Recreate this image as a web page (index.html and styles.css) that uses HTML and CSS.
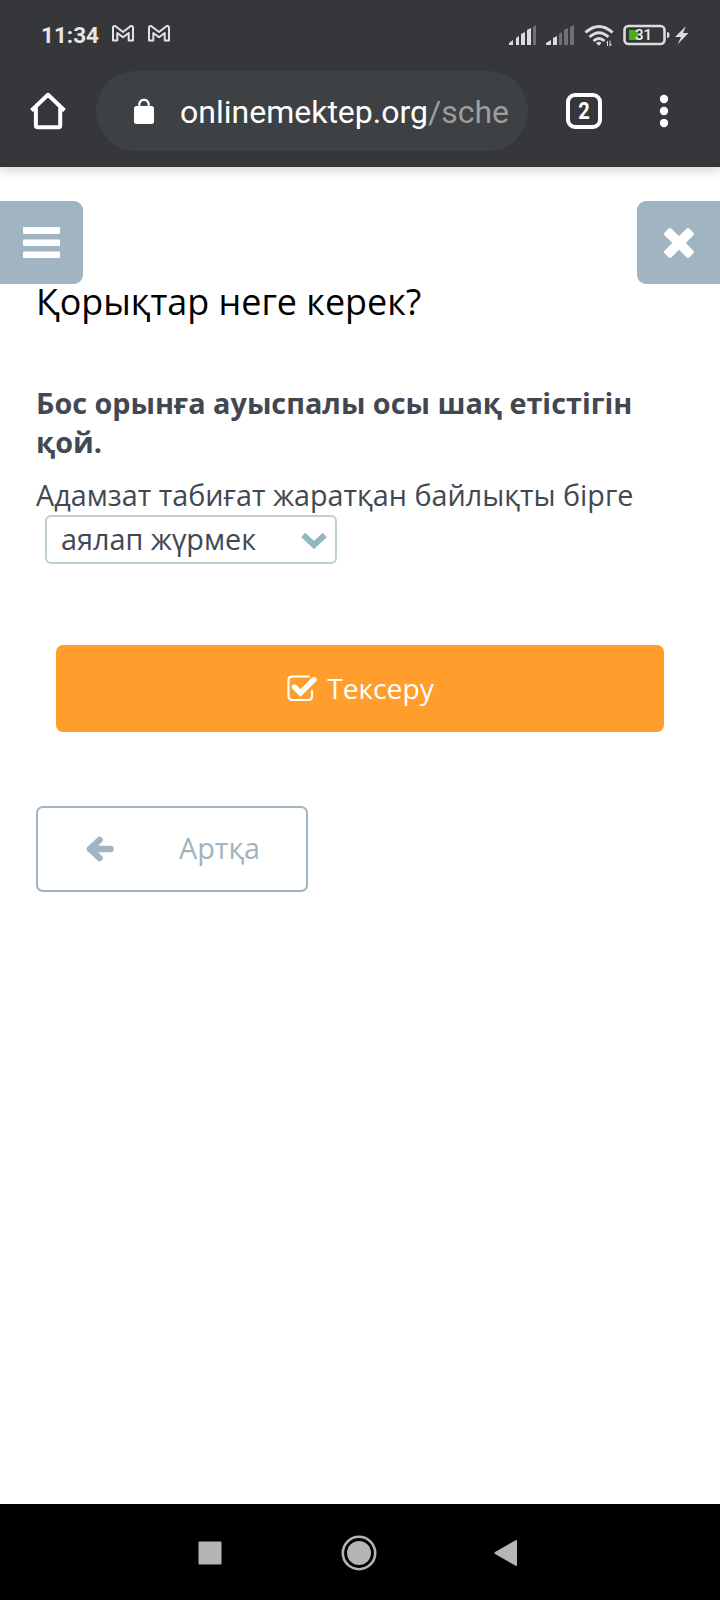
FILE: index.html
```html
<!DOCTYPE html>
<html lang="kk">
<head>
<meta charset="utf-8">
<title>onlinemektep.org</title>
<link rel="stylesheet" href="styles.css">
</head>
<body>
<header class="browser">
  <div class="status">
    <span class="time">11:34</span>
    <svg class="mail" width="24" height="18" viewBox="0 0 24 18"><path d="M2 16.500V4Q2 1.500 4.200 2L12 8 19.800 2Q22 1.500 22 4V16.500H17.700V9L12 13.200 6.300 9V16.500Z"/></svg>
    <svg class="mail" width="24" height="18" viewBox="0 0 24 18"><path d="M2 16.500V4Q2 1.500 4.200 2L12 8 19.800 2Q22 1.500 22 4V16.500H17.700V9L12 13.200 6.300 9V16.500Z"/></svg>
    <svg class="signals" width="182" height="24" viewBox="507 23 182 24">
      <g fill="#dcdcde"><path d="M509 45v-2l4-3v5zM516 38l3-2v9h-3zM521 34l4-2v13h-4zM527 30l4-2v17h-4z"/><path d="M546 45v-2l5-3v5zM553 38l4-2v9h-4z"/></g>
      <g fill="#707174"><path d="M533 27l3-2v20h-3zM559 34l3-2v13h-3zM564 30l4-2v17h-4zM570 27l4-2v20h-4z"/></g>
      <g fill="none" stroke="#dcdcde" stroke-width="3"><path d="M585.500 32.500Q599 20.500 612.500 32.500M589.500 37Q599 28.500 608.500 37M593.500 41Q599 36 604.500 41"/></g>
      <path d="M596 43q3-2.500 5.500 0l-2.700 2.700zM606 43l2-2.500V46h-1v-3zM609.500 40.500h1V44h1.500l-2.500 3z" fill="#dcdcde"/>
      <rect x="624.500" y="26" width="40" height="18" rx="4" fill="none" stroke="#dcdcde" stroke-width="2.600"/>
      <path d="M629 30h9v10h-9z" fill="#4cae13"/><path d="M667 32q2.500 0 2.500 2v2q0 2-2.500 2z" fill="#dcdcde"/>
      <text x="643.500" y="40.300" class="charge">31</text>
      <path d="M686 26L675 37h6l-3.500 7.500L688.500 33h-5.500z" fill="#dcdcde"/>
    </svg>
  </div>
  <div class="toolbar">
    <svg class="home" width="38" height="38" viewBox="0 0 38 38"><path d="M2.500 18.500L19 2.800 35.500 18.500M6.900 15V33.500Q6.900 35.300 8.700 35.300H29.500Q31.200 35.300 31.200 33.500V15" /></svg>
    <div class="address">
      <svg class="lock" width="20" height="26" viewBox="0 0 20 26"><path d="M5.300 10V5.800a4.800 4.800 0 0 1 9.400 0V10" fill="none" stroke="#fff" stroke-width="2.200"/><rect y="8" width="20" height="18" rx="2.500" fill="#fff"/></svg>
      <span class="url">onlinemektep.org<span class="path">/sche</span></span>
    </div>
    <div class="tabs"><span>2</span></div>
    <svg class="dots" width="10" height="34" viewBox="0 0 10 34"><g fill="#fff"><circle cx="5" cy="5" r="4.200"/><circle cx="5" cy="17" r="4.200"/><circle cx="5" cy="29" r="4.200"/></g></svg>
  </div>
</header>
<main class="page">
  <div class="actions">
    <button class="square menu" aria-label="menu"><svg width="38" height="32" viewBox="0 0 38 32"><g fill="#fff"><rect width="37" height="7" rx="1"/><rect y="12.500" width="37" height="6.500" rx="1"/><rect y="24.500" width="37" height="6.500" rx="1"/></g></svg></button>
    <button class="square close" aria-label="close"><svg width="30" height="30" viewBox="0 0 30 30"><g fill="#fff"><rect x="-2.500" y="10.200" width="35" height="9.600" rx="2.200" transform="rotate(45 15 15)"/><rect x="-2.500" y="10.200" width="35" height="9.600" rx="2.200" transform="rotate(-45 15 15)"/></g></svg></button>
  </div>
  <h1>Қорықтар неге керек?</h1>
  <p class="task">Бос орынға ауыспалы осы шақ етістігін қой.</p>
  <p class="sentence">Адамзат табиғат жаратқан байлықты бірге</p>
  <div class="select"><span>аялап жүрмек</span><svg width="26" height="18" viewBox="0 0 26 18"><path d="M2.200 4L13 14 23.800 4"/></svg></div>
  <button class="check"><svg width="30" height="27" viewBox="0 0 30 27"><path d="M22 1.500H5.500Q1.500 1.500 1.500 5.500V21Q1.500 25 5.500 25H21Q25 25 25 21V16" stroke-width="2.200"/><path d="M7.500 12L13.500 18 27 4.500" stroke-width="5.400"/></svg><span>Тексеру</span></button>
  <button class="back"><svg width="30" height="26" viewBox="0 0 30 26"><path d="M14.500 4L5 13l9.500 9M5 13H25.500"/></svg><span>Артқа</span></button>
</main>
<nav class="system">
  <svg width="24" height="24" viewBox="0 0 24 24"><rect x=".5" y=".5" width="23" height="23" rx="1"/></svg>
  <svg width="36" height="36" viewBox="0 0 36 36"><circle cx="18" cy="18" r="16.200" fill="none" stroke="#b5b5b5" stroke-width="2.600"/><circle cx="18" cy="18" r="12"/></svg>
  <svg width="24" height="28" viewBox="0 0 24 28"><path d="M1 13Q0 14 1 15L22 27Q23 27 23 26V2Q23 1 22 1Z"/></svg>
</nav>
</body>
</html>
```
FILE: styles.css
```css
* { box-sizing: border-box; }
body { margin: 0; width: 720px; height: 1600px; display: flex; flex-direction: column; background: #fff; color: #424852; font-family: "Open Sans", "Noto Sans", sans-serif; overflow: hidden; }
button { font: inherit; padding: 0; border: 0; }
svg { display: block; flex: none; }
p, h1 { margin: 0; white-space: nowrap; }
.browser { height: 167px; flex: none; background: #36373b; color: #fff; font-family: Roboto, sans-serif; box-shadow: 0 2px 12px #00000038; }
.status { height: 71px; padding-left: 41px; display: flex; align-items: flex-start; color: #e6e6e8; }
.time { width: 70px; padding-top: 22px; font-size: 22.500px; line-height: 27px; font-weight: 700; }
.mail { margin: 24px 12px 0 0; fill: none; stroke: #e3e3e5; stroke-width: 2; stroke-linejoin: round; }
.signals { margin: 23px 31px 0 auto; }
.charge { font-size: 15px; font-weight: 500; text-anchor: middle; fill: #f0f0f0; }
.toolbar { height: 80px; display: flex; align-items: center; }
.home { margin: 0 29px; fill: none; stroke: #fff; stroke-width: 4; stroke-linejoin: round; }
.address { width: 432px; height: 80px; border-radius: 40px; background: #3e4144; display: flex; align-items: center; padding-left: 38px; }
.lock { margin-right: 26px; }
.url { width: 330px; padding-top: 2px; font-size: 32px; line-height: 40px; white-space: nowrap; }
.path { color: #9b9d9f; }
.tabs { width: 36px; height: 36px; margin-left: 38px; border: 4px solid #fff; border-radius: 9px; font-size: 24px; font-weight: 700; line-height: 29px; text-align: center; }
.tabs span { display: block; transform: scaleX(.84); }
.dots { margin-left: 57px; }
.page { flex: 1; padding: 34px 36px 0; display: flex; flex-direction: column; align-items: flex-start; }
.actions { width: 720px; margin: 0 -36px; display: flex; justify-content: space-between; }
.square { width: 83px; height: 83px; display: flex; align-items: center; background: #a0b4c1; }
.menu { border-radius: 0 9px 9px 0; padding-left: 23px; }
.close { border-radius: 9px 0 0 9px; padding: 1px 0 0 27px; }
h1 { font-size: 35.900px; font-weight: 400; line-height: 50px; margin-top: -7px; color: #000; }
.task { margin-top: 56px; font-size: 28.800px; font-weight: 700; line-height: 39px; width: 620px; white-space: normal; }
.sentence { margin-top: 14px; font-size: 28.750px; line-height: 39px; }
.select { width: 292px; height: 49px; margin: 1px 0 0 9px; border: 2px solid #bed0d4; border-radius: 6px; display: flex; align-items: center; justify-content: space-between; padding: 0 8px 0 14px; font-size: 28.800px; line-height: 40px; white-space: nowrap; }
.select span { padding-bottom: 2px; }
.select path { fill: none; stroke: #91b8c1; stroke-width: 6; }
.check { width: 608px; height: 87px; margin: 81px 0 0 20px; border-radius: 7px; background: #ff9e2c; color: #fff; display: flex; align-items: center; justify-content: center; gap: 10px; padding: 0 0 1px 1px; font-size: 28.200px; }
.check span { padding-bottom: 1px; }
.back span { padding-bottom: 3px; }
.check path { fill: none; stroke: #fff; stroke-linecap: round; }
.back { width: 272px; height: 86px; margin-top: 74px; border: 2px solid #a0b4c1; border-radius: 7px; background: #fff; color: #a0b4bf; display: flex; align-items: center; padding-left: 47px; font-size: 28.800px; }
.back svg { margin-right: 64px; }
.back path { fill: none; stroke: #a0b4c1; stroke-width: 6.500; stroke-linecap: round; stroke-linejoin: round; }
.system { height: 96px; flex: none; background: #000; display: flex; align-items: center; justify-content: space-between; padding: 1px 202px 0 198px; fill: #b5b5b5; }
.system svg:nth-child(2) { margin-left: 2px; }
```
